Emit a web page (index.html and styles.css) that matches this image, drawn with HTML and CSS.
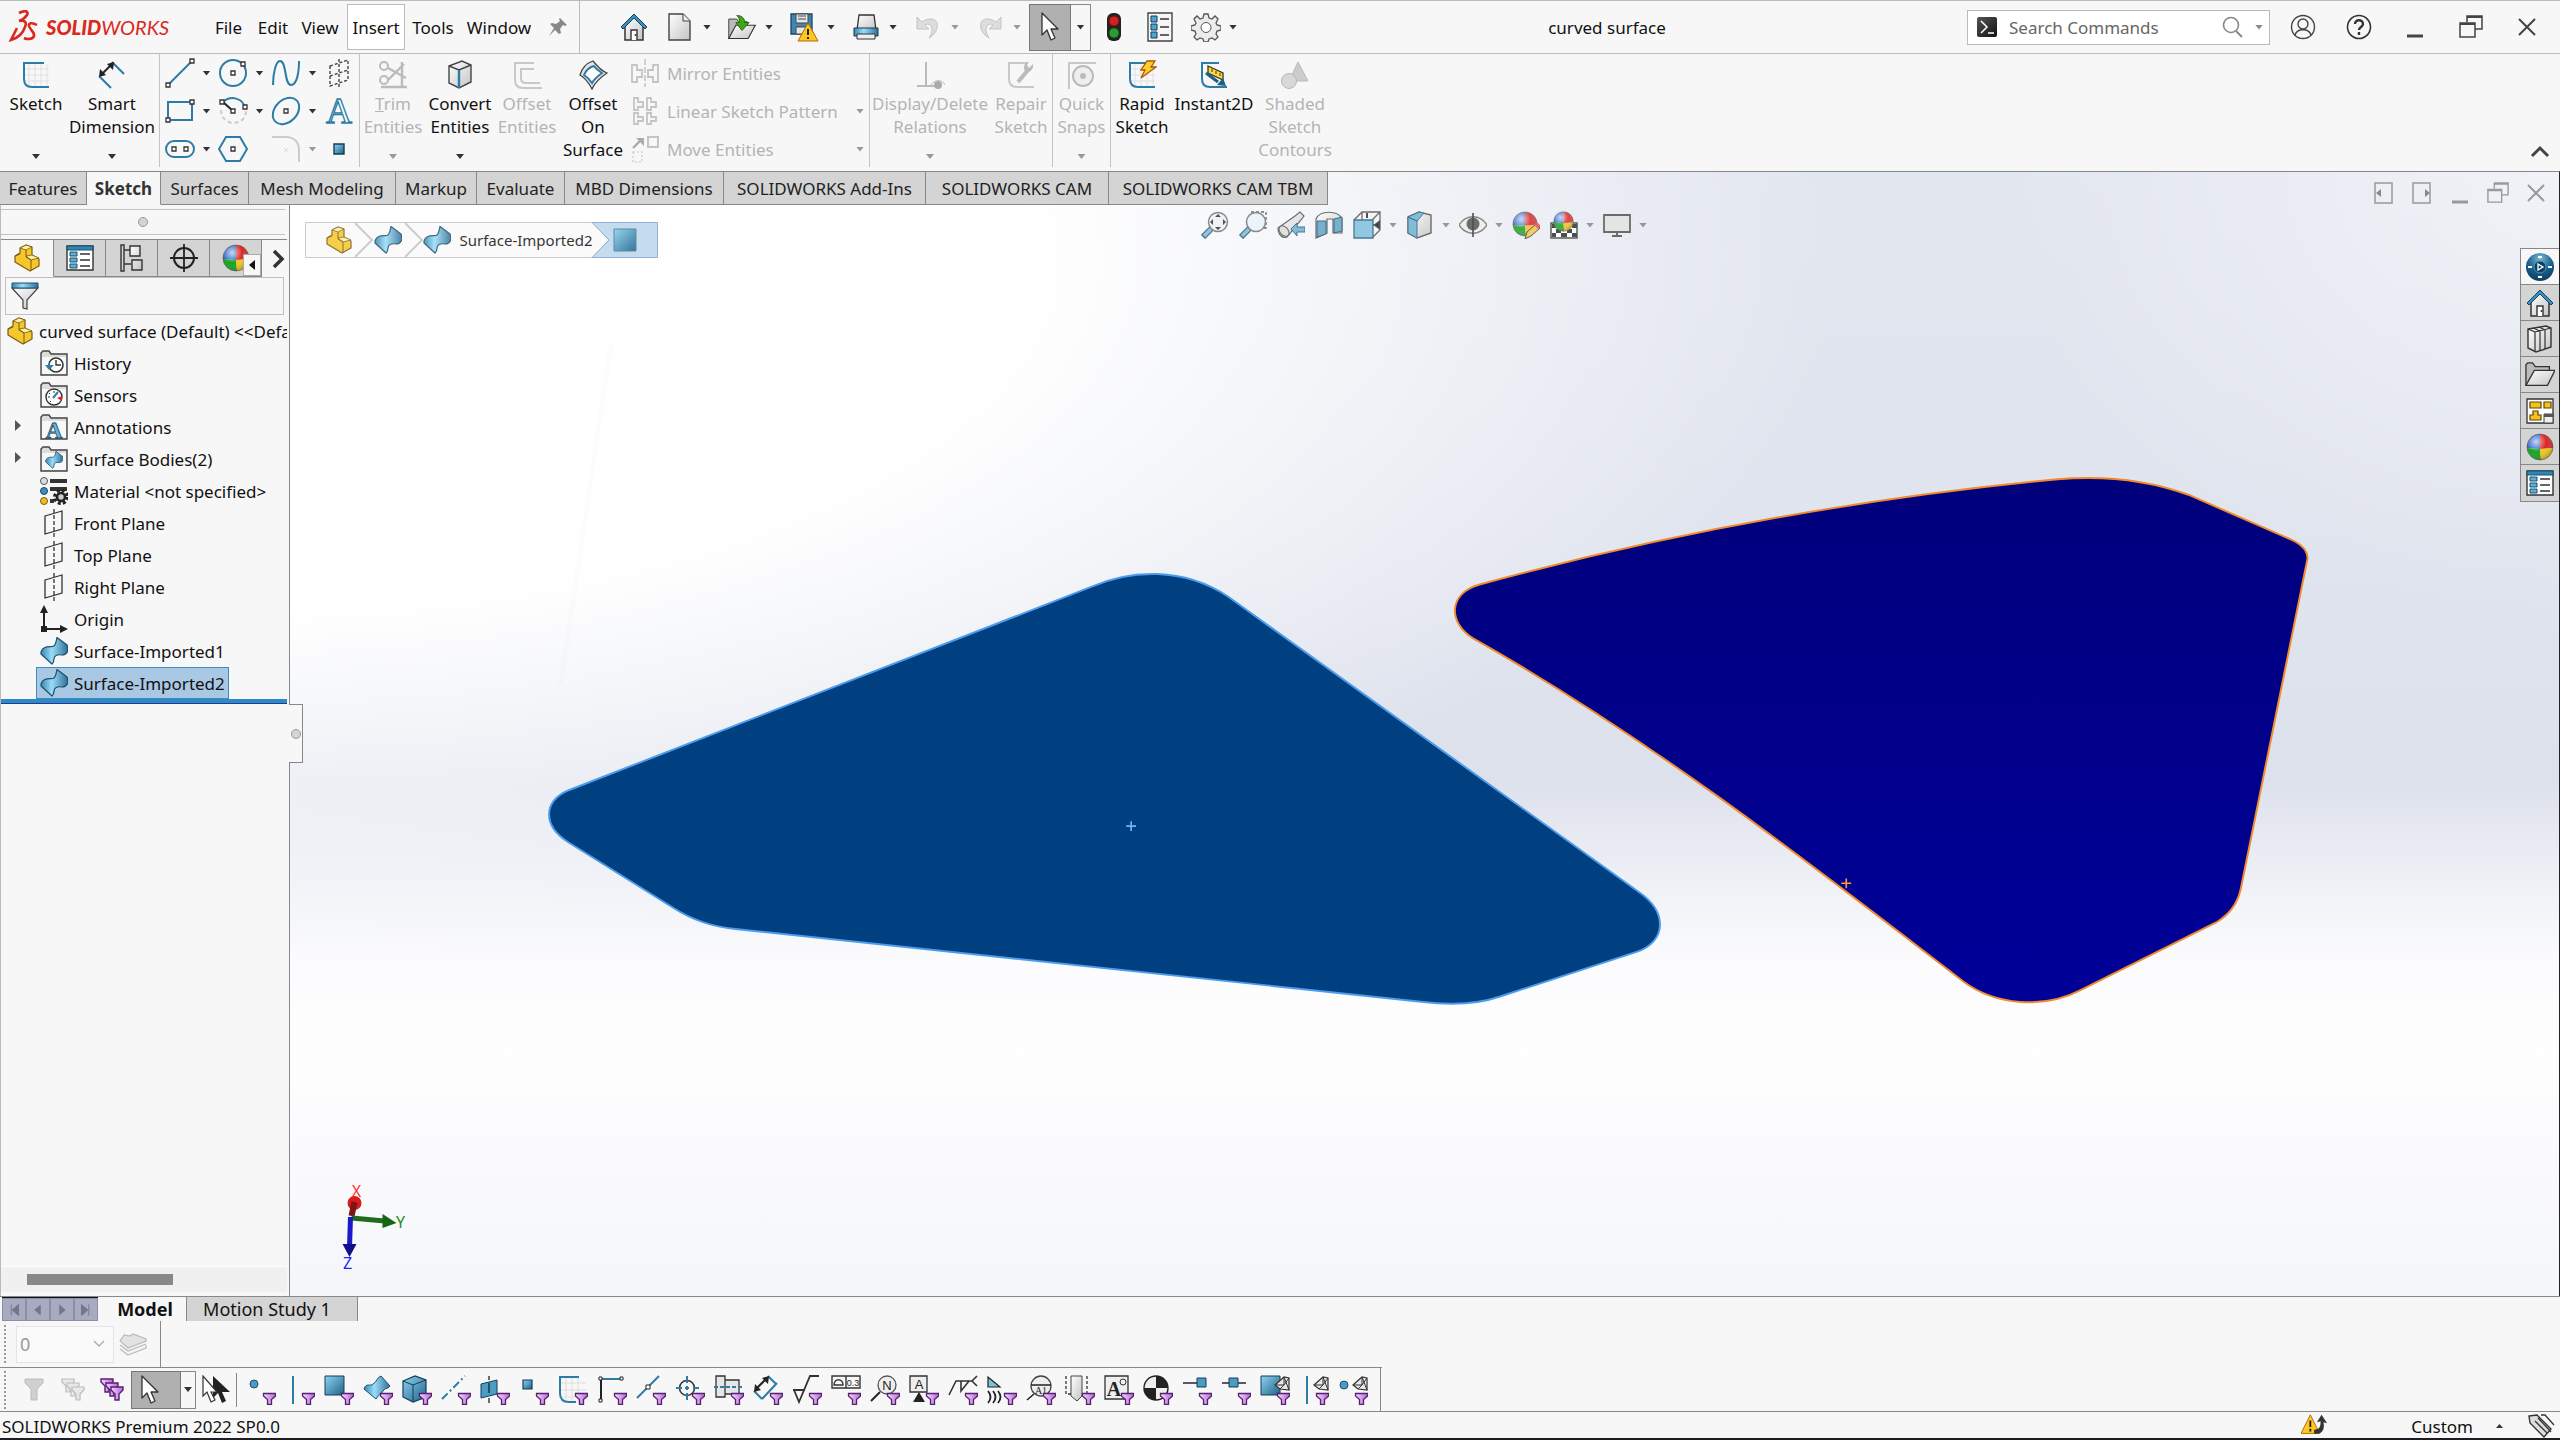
FILE: index.html
```html
<!DOCTYPE html>
<html lang="en">
<head>
<meta charset="utf-8">
<title>curved surface</title>
<link rel="stylesheet" href="styles.css">
</head>
<body>
<svg class="sprite" aria-hidden="true">
  <defs>
    <linearGradient id="gb" x1="0" y1="0" x2="1" y2="1"><stop offset="0" stop-color="#8fd3f2"/><stop offset="1" stop-color="#1f6288"/></linearGradient>
    <linearGradient id="gh" x1="0" y1="0" x2="1" y2="0"><stop offset="0" stop-color="#3787b0"/><stop offset=".4" stop-color="#9adcf8"/><stop offset="1" stop-color="#2d7197"/></linearGradient>
    <linearGradient id="gw" x1="0" y1="0" x2="1" y2="1"><stop offset="0" stop-color="#fff"/><stop offset="1" stop-color="#c4c4c4"/></linearGradient>
    <linearGradient id="gp" x1="0" y1="0" x2="1" y2="0"><stop offset="0" stop-color="#f6d6ff"/><stop offset="1" stop-color="#b567d8"/></linearGradient>
    <linearGradient id="gk" x1="0" y1="0" x2="1" y2="1"><stop offset="0" stop-color="#555"/><stop offset="1" stop-color="#111"/></linearGradient>
    <radialGradient id="gs" cx=".35" cy=".3" r=".8"><stop offset="0" stop-color="#fff" stop-opacity=".75"/><stop offset=".5" stop-color="#fff" stop-opacity="0"/><stop offset="1" stop-color="#000" stop-opacity=".35"/></radialGradient>
    <radialGradient id="gd" cx=".5" cy=".2" r=".9"><stop offset="0" stop-color="#7db9d8"/><stop offset=".5" stop-color="#17608c"/><stop offset="1" stop-color="#0a3350"/></radialGradient>
    <linearGradient id="gn" x1="0" y1="0" x2="0" y2="1"><stop offset="0" stop-color="#00007c"/><stop offset="1" stop-color="#000098"/></linearGradient>
  </defs>
  <symbol id="funnel" viewBox="0 0 30 30"><path d="M17.500 18.500h12v2.500l-4 3.500v5h-4v-5l-4-3.500z" fill="url(#gp)" stroke="#55206e" stroke-width="1.300"/></symbol>
  <symbol id="part" viewBox="0 0 28 28"><path d="M2 12l5-3V4l6-3 6 2v8l7 4v7l-9 5L2 18z" fill="#f5c72c" stroke="#7a5c10" stroke-width="1.200" stroke-linejoin="round"/><path d="M7 4l6 2 6-3-6-2zM13 12l5 4 8-2-7-3z" fill="#fdeea0" stroke="#7a5c10" stroke-width=".8"/><path d="M13 6v7l5 3v11M2 12l5-2" fill="none" stroke="#7a5c10"/></symbol>
  <symbol id="surf" viewBox="0 0 28 28"><path d="M1 15C3 9 8 10 13 9.500c3-1 3-5 4-9L27 8c2 6 0 10-5 10-5-1-8 1-8 4 0 2-1 4-2 5L1 17z" fill="url(#gh)" stroke="#1d4f6c" stroke-width="1.200" stroke-linejoin="round"/></symbol>
  <symbol id="home" viewBox="0 0 28 30"><path d="M5 14v14h18V14l-9-9z" fill="url(#gw)" stroke="#333" stroke-width="1.500"/><path d="M1 15L14 2l13 13-2 2L14 6 3 17z" fill="#3c8fba" stroke="#14455f"/><path d="M11 28V18h6v10" fill="#fff" stroke="#333" stroke-width="1.400"/><circle cx="15.500" cy="23" r="1" fill="#333"/></symbol>
  <symbol id="ball" viewBox="0 0 28 28"><path d="M14 1A13 13 0 0 0 1 15l13 1z" fill="#2a62c8"/><path d="M14 1a13 13 0 0 1 13 14l-13 1z" fill="#d92727"/><path d="M1 15a13 13 0 0 0 14 12l-1-11z" fill="#17a221"/><path d="M27 15a13 13 0 0 1-12 12l-1-11z" fill="#f2c51d"/><circle cx="14" cy="14" r="13" fill="url(#gs)" stroke="#555" stroke-width=".6"/></symbol>
  <symbol id="list" viewBox="0 0 28 28"><path d="M1 2h26v24H1z" fill="#fff" stroke="#333" stroke-width="1.400"/><path d="M1 2h26v4H1z" fill="#2f86b3" stroke="#17506f"/><path d="M4 8h7v4H4zM4 14h7v4H4zM4 20h7v4H4z" fill="#5fb0d8" stroke="#17506f"/><path d="M14 10h10M14 16h10M14 22h10" stroke="#333" stroke-width="1.300"/></symbol>
  <symbol id="cursor" viewBox="0 0 20 30"><path d="M2 1v22l5-5 4 10 4-2-4-9h7z" fill="#fff" stroke="#333" stroke-width="1.300" stroke-linejoin="round"/></symbol>
  <symbol id="plane" viewBox="0 0 28 28"><path d="M5 7l17-5v18L5 25z" fill="none" stroke="#333" stroke-width="1.300"/><path d="M14 0v28" stroke="#333" stroke-width="1.300" stroke-dasharray="4 2"/></symbol>
  <symbol id="folder" viewBox="0 0 28 26"><path d="M1 25V3l2-2h6l2 3h16v21z" fill="#ddd" stroke="#444" stroke-width="1.400"/><path d="M2 7h24v17H2z" fill="#f8f8f8"/></symbol>
  <symbol id="restore" viewBox="0 0 24 24"><path d="M8 7V1h15v13h-7M1 8h15v14H1z" fill="none" stroke="currentColor" stroke-width="1.500"/><path d="M8 2h15M1 9h15" stroke="currentColor" stroke-width="2"/></symbol>
  <symbol id="close" viewBox="0 0 20 20"><path d="M2 2l16 16M18 2L2 18" stroke="currentColor" stroke-width="2"/></symbol>
  <symbol id="hlens" viewBox="0 0 28 28"><path d="M11 17l-9 9" stroke="#2f5f78" stroke-width="6"/><path d="M10 18l-7 7" stroke="#7fbcd8" stroke-width="3.500"/><circle cx="17" cy="11" r="9.500" fill="#eaf4f8" stroke="#777" stroke-width="1.500"/></symbol>
  <symbol id="mesh" viewBox="0 0 30 30"><path d="M15 10L24 2l5 1v12l-9-1z" fill="#e8e8e8" stroke="#333" stroke-width="1.200"/><path d="M15 10l9 0V2l5 13M24 10l5-7M24 10l-4 4" fill="none" stroke="#333"/></symbol>
</svg>

<header class="titlebar">
  <div class="brand">
    <svg class="mark" viewBox="0 0 30 34"><path d="M10 3c6-3 10-2 8 2-2 3-5 5-8 6 6-1 8 1 6 6-2 6-7 11-14 13l6-12M28 15c-5-3-9-2-8 1 1 4 6 6 5 10-1 3-6 4-10 2" fill="none" stroke="#da291c" stroke-width="2.600"/></svg>
    <span class="logo"><b>SOLID</b>WORKS</span>
  </div>
  <nav class="menu">
    <button>File</button><button>Edit</button><button>View</button><button class="open">Insert</button><button>Tools</button><button>Window</button>
  </nav>
  <button class="pin" aria-label="Pin menu"><svg viewBox="0 0 20 20" width="20" height="20"><path d="M12 1l7 7-2 1-2-1-3 4 1 4-2 1-4-4-6 6 5-8-4-4 2-1 4 1 4-3-1-2z" fill="#888"/></svg></button>
  <div class="quick">
    <button class="q"><svg class="i30"><use href="#home"/></svg></button>
    <button class="q"><svg class="i30" viewBox="0 0 30 30"><path d="M4 2h14l7 7v19H4z" fill="url(#gw)" stroke="#444" stroke-width="1.400"/><path d="M18 2v7h7" fill="#eee" stroke="#444"/></svg></button><i class="dd"></i>
    <button class="q"><svg class="i30" viewBox="0 0 34 30"><path d="M2 28V6h9l2 3h10v19z" fill="#bbb" stroke="#333"/><path d="M2 28l8-15h22l-8 15z" fill="url(#gw)" stroke="#333" stroke-width="1.300"/><path d="M11 2c7 0 9 4 9 8h5l-8 9-7-9h4c0-3 0-6-3-8z" fill="#3fa51c" stroke="#226209"/></svg></button><i class="dd"></i>
    <button class="q"><svg class="i30" viewBox="0 0 30 30"><path d="M2 2h21v20H2z" fill="#3c88b3" stroke="#1c4661" stroke-width="1.300"/><path d="M7 2h12v9H7zM7 15h12v7H7z" fill="#e6e6e6" stroke="#444"/><path d="M9 4h8M9 7h8" stroke="#444"/><path d="M19 11l10 18H9z" fill="#fcc722" stroke="#b26a00"/><path d="M19 17v6M19 25v2" stroke="#222" stroke-width="2"/></svg></button><i class="dd"></i>
    <button class="q"><svg class="i30" viewBox="0 0 30 30"><path d="M8 3h15l2 15H6z" fill="url(#gw)" stroke="#333" stroke-width="1.300"/><path d="M3 16h24v8H3z" fill="url(#gh)" stroke="#133b52"/><path d="M6 22h18v5H6z" fill="#eee" stroke="#333"/></svg></button><i class="dd"></i>
    <button class="q" disabled><svg class="i30" viewBox="0 0 30 30"><path d="M4 5v12h12l-4-4c6-3 10 4 4 13 11-6 11-20 1-19-4 0-6 2-8 3z" fill="#ddd" stroke="#c4c4c4"/></svg></button><i class="dd dim"></i>
    <button class="q" disabled><svg class="i30" viewBox="0 0 30 30"><path d="M26 5v12H14l4-4c-6-3-10 4-4 13C3 20 3 6 13 7c4 0 6 2 8 3z" fill="#ddd" stroke="#c4c4c4"/></svg></button><i class="dd dim"></i>
    <div class="pick"><button class="pickmain"><svg class="cur"><use href="#cursor"/></svg></button><button class="pickdd"><i class="dd"></i></button></div>
    <button class="q traffic"><svg class="i30" viewBox="0 0 30 30"><rect x="8" y="1" width="14" height="28" rx="6" fill="#222"/><circle cx="15" cy="9" r="5" fill="#d32020" stroke="#7c0d0d"/><circle cx="15" cy="21" r="5" fill="#2b9c31" stroke="#0e5413"/></svg></button>
    <button class="q props"><svg class="i30" viewBox="0 0 30 30"><path d="M3 1h24v28H3z" fill="#f6f6f6" stroke="#444" stroke-width="1.400"/><path d="M6 4h6v6H6zM6 12h6v6H6zM6 20h6v6H6z" fill="#4fa3cd" stroke="#123e57"/><path d="M15 7h9M15 15h9M15 23h9" stroke="#333" stroke-width="1.400"/></svg></button>
    <button class="q"><svg class="i30" viewBox="0 0 30 30"><path d="M13 2h4l1 4 3 1 3-3 3 3-2 4 1 2 4 1v4l-4 1-1 3 2 3-3 3-3-2-3 1-1 3h-4l-1-3-3-1-3 2-3-3 2-3-1-3-4-1v-4l4-1 1-2-2-4 3-3 3 3 3-1z" fill="#ececec" stroke="#555" stroke-width="1.300"/><circle cx="15" cy="15.500" r="5" fill="#fff" stroke="#555"/></svg></button><i class="dd"></i>
  </div>
  <div class="doctitle">curved surface</div>
  <div class="search">
    <svg width="22" height="22" viewBox="0 0 22 22"><rect x="1" y="1" width="20" height="20" rx="2" fill="url(#gk)"/><path d="M5 5l6 6-6 6M12 17h6" fill="none" stroke="#fff" stroke-width="1.500"/></svg>
    <input type="text" placeholder="Search Commands" aria-label="Search Commands">
    <svg width="22" height="22" viewBox="0 0 22 22"><circle cx="9" cy="9" r="7.500" fill="none" stroke="#888" stroke-width="1.600"/><path d="M14 15l6 6" stroke="#888" stroke-width="2"/></svg>
    <i class="dd mid"></i>
  </div>
  <div class="winctl">
    <button aria-label="Account"><svg width="26" height="26" viewBox="0 0 26 26" fill="none" stroke="#444" stroke-width="1.400"><circle cx="13" cy="13" r="11.500"/><circle cx="13" cy="10" r="5"/><path d="M5 21c2-7 14-7 16 0"/></svg></button>
    <button aria-label="Help"><svg width="26" height="26" viewBox="0 0 26 26" fill="none" stroke="#333"><circle cx="13" cy="13" r="11.500" stroke-width="1.600"/><path d="M9 10c0-5 8-5 8 0 0 3-4 3-4 6M13 18v3" stroke-width="2.400"/></svg></button>
    <button aria-label="Minimize"><svg width="20" height="24" viewBox="0 0 20 24"><path d="M2 21h16" stroke="#444" stroke-width="3"/></svg></button>
    <button aria-label="Restore"><svg width="24" height="24"><use href="#restore"/></svg></button>
    <button aria-label="Close"><svg width="20" height="20"><use href="#close"/></svg></button>
  </div>
</header>

<section class="ribbon">
  <div class="group g-sketch">
    <button class="cmd w62"><svg class="i30" viewBox="0 0 30 30"><path d="M8 4v24M14 4v24M20 4v24M26 4v24M3 9h25M3 15h25M3 21h25" stroke="#e0e0e0"/><path d="M23 3H3v16c0 6 4 8 8 8h17" fill="none" stroke="#2d7ca6" stroke-width="2"/></svg><span>Sketch</span><i class="dd"></i></button>
    <button class="cmd w90"><svg class="i30" viewBox="0 0 30 30"><path d="M15 2l12 12M2 16l12 12" stroke="#2d7ca6" stroke-width="2"/><path d="M4 15L16 3" stroke="#222" stroke-width="2"/><path d="M2 17l1-8 6 6zM17 2l-1 8-6-6z" fill="#222"/></svg><span>Smart<br>Dimension</span><i class="dd"></i></button>
  </div>
  <div class="group g-tools">
    <button class="tool"><svg class="i30" viewBox="0 0 30 30"><path d="M4 26L26 4" stroke="#2d7ca6" stroke-width="2"/><path d="M1 25h4v4H1zM25 1h4v4h-4z" fill="#fff" stroke="#333" stroke-width="1.300"/></svg></button><i class="dd"></i>
    <button class="tool"><svg class="i30" viewBox="0 0 30 30"><circle cx="15" cy="15" r="13" fill="none" stroke="#2d7ca6" stroke-width="2"/><path d="M13 13h4v4h-4zM23 4h4v4h-4z" fill="#fff" stroke="#333" stroke-width="1.300"/></svg></button><i class="dd"></i>
    <button class="tool"><svg class="i30" viewBox="0 0 30 30"><path d="M2 27C2 15 5 3 9 3c7 0 4 24 11 24 6 0 8-13 8-24" fill="none" stroke="#2d7ca6" stroke-width="2"/></svg></button><i class="dd"></i>
    <button class="tool"><svg class="i30" viewBox="0 0 30 30"><path d="M6 8l18-6v20L6 28zM6 18l18-6M15 1v28" fill="none" stroke="#444" stroke-width="1.400" stroke-dasharray="3 2"/></svg></button>
    <button class="tool"><svg class="i30" viewBox="0 0 30 30"><path d="M3 6h24v18H3z" fill="none" stroke="#2d7ca6" stroke-width="2"/><path d="M1 22h4v4H1zM25 4h4v4h-4z" fill="#fff" stroke="#333" stroke-width="1.300"/></svg></button><i class="dd"></i>
    <button class="tool"><svg class="i30" viewBox="0 0 30 30"><path d="M5 6c8-7 20-4 22 6" fill="none" stroke="#2d7ca6" stroke-width="2"/><path d="M3 14c0 17 25 17 25 1" fill="none" stroke="#ccc" stroke-width="2" stroke-dasharray="4 3"/><path d="M5 6l10 9" stroke="#222" stroke-width="2"/><path d="M2 4h4v4H2zM13 13h4v4h-4zM25 9h4v4h-4z" fill="#fff" stroke="#333" stroke-width="1.300"/></svg></button><i class="dd"></i>
    <button class="tool"><svg class="i30" viewBox="0 0 30 30"><ellipse cx="15" cy="15" rx="15" ry="11" transform="rotate(-45 15 15)" fill="none" stroke="#2d7ca6" stroke-width="2"/><path d="M13 13h4v4h-4z" fill="#fff" stroke="#333" stroke-width="1.300"/></svg></button><i class="dd"></i>
    <button class="tool"><svg class="i30 glyph" viewBox="0 0 30 30"><text x="15" y="27" text-anchor="middle" font-family="Liberation Serif, serif" font-size="36" fill="#fff" stroke="#2d7ca6" stroke-width="1.300">A</text></svg></button>
    <button class="tool"><svg class="i30" viewBox="0 0 30 30"><rect x="1" y="7" width="28" height="16" rx="8" fill="none" stroke="#2d7ca6" stroke-width="2"/><path d="M7 13h4v4H7zM19 13h4v4h-4z" fill="#fff" stroke="#333" stroke-width="1.300"/></svg></button><i class="dd"></i>
    <button class="tool"><svg class="i30" viewBox="0 0 30 30"><path d="M8 3h14l7 12-7 12H8L1 15z" fill="none" stroke="#2d7ca6" stroke-width="2"/><path d="M13 13h4v4h-4z" fill="#fff" stroke="#333" stroke-width="1.300"/></svg></button><i class="gap"></i>
    <button class="tool"><svg class="i30" viewBox="0 0 30 30"><path d="M1 3h14c8 0 13 5 13 13v12" fill="none" stroke="#ccc" stroke-width="2"/><path d="M13 14l4 4M17 14l-4 4" stroke="#ddd"/></svg></button><i class="dd dim"></i>
    <button class="tool"><svg class="i30" viewBox="0 0 30 30"><path d="M10 10h10v10H10z" fill="url(#gb)" stroke="#123e57" stroke-width="1.400"/></svg></button>
  </div>
  <div class="group">
    <button class="cmd w66" disabled><svg class="i30" viewBox="0 0 30 30"><path d="M3 27h26M24 2v26M10 8l18 10M10 20L26 4" stroke="#bbb" stroke-width="2.400"/><circle cx="6" cy="6" r="4" fill="none" stroke="#bbb" stroke-width="2"/><circle cx="6" cy="20" r="4" fill="none" stroke="#bbb" stroke-width="2"/></svg><span><u>T</u>rim<br>Entities</span><i class="dd dim"></i></button>
    <button class="cmd w68"><svg class="i30" viewBox="0 0 30 30"><path d="M4 6l13-5 9 4v17l-12 6-10-5z" fill="url(#gw)" stroke="#444" stroke-width="1.400"/><path d="M4 6l10 4 12-5" fill="none" stroke="#444" stroke-width="1.400"/><path d="M14 10v18" stroke="#2d7ca6" stroke-width="2.400"/></svg><span>Convert<br>Entities</span><i class="dd"></i></button>
    <button class="cmd w66" disabled><svg class="i30" viewBox="0 0 30 30"><path d="M22 3H3v17c0 6 4 8 8 8h19M22 9H9v9c0 3 2 5 5 5h14" fill="none" stroke="#c8c8c8" stroke-width="2"/></svg><span>Offset<br>Entities</span></button>
    <button class="cmd w66"><svg class="i30" viewBox="0 0 30 30"><path d="M2 15C4 8 9 3 15 1c4 5 8 10 14 12-6 4-12 9-15 16-3-6-7-11-12-14z" fill="#e5e5e5" stroke="#444" stroke-width="1.300"/><path d="M6 15c2-5 6-8 10-9 2 3 5 5 8 7-4 3-8 6-10 10-2-3-5-6-8-8z" fill="#fff" stroke="#2d7ca6" stroke-width="2"/></svg><span>Offset<br>On<br>Surface</span></button>
    <div class="stack">
      <button class="row" disabled><svg class="i28" viewBox="0 0 28 28"><path d="M1 6h5v5h5v7H6v5H1zM27 6h-5v5h-5v7h5v5h5z" fill="none" stroke="#c4c4c4" stroke-width="1.800"/><path d="M14 0v28" stroke="#c4c4c4" stroke-width="1.500" stroke-dasharray="6 2"/></svg><span>Mirror Entities</span></button>
      <button class="row" disabled><svg class="i28" viewBox="0 0 28 28"><path d="M3 1h4v4h5v5H7v3H3zM16 1h4v4h5v5h-5v3h-4zM3 16h4v4h5v4H7v3H3zM16 16h4v4h5v4h-5v3h-4z" fill="none" stroke="#c4c4c4" stroke-width="1.800"/></svg><span>Linear Sketch Pattern</span><i class="dd dim"></i></button>
      <button class="row" disabled><svg class="i28" viewBox="0 0 28 28"><path d="M17 2h10v10H17z" fill="none" stroke="#c4c4c4" stroke-width="2"/><path d="M2 13l8-8" stroke="#aaa" stroke-width="2.400"/><path d="M5 3h8v8z" fill="#aaa"/><path d="M2 17h9v10H2z" fill="none" stroke="#d4d4d4" stroke-width="1.500" stroke-dasharray="2 2"/></svg><span>Move Entities</span><i class="dd dim"></i></button>
    </div>
  </div>
  <div class="group">
    <button class="cmd w120" disabled><svg class="i30" viewBox="0 0 30 30"><path d="M2 26h18M11 2v24" stroke="#bbb" stroke-width="2"/><circle cx="23" cy="25" r="4" fill="#aaa"/><path d="M16 25c4-6 11-6 14 0" fill="none" stroke="#bbb"/></svg><span>Display/Delete<br>Relations</span><i class="dd dim"></i></button>
    <button class="cmd w62" disabled><svg class="i30" viewBox="0 0 30 30"><path d="M22 3H3v16c0 6 4 8 8 8h17" fill="none" stroke="#c8c8c8" stroke-width="2"/><path d="M12 22l10-12" stroke="#bbb" stroke-width="4"/><path d="M27 4l-4 4-2-3 2-3c-6 0-6 8-3 10 4 1 8-3 7-8z" fill="#bbb"/></svg><span>Repair<br>Sketch</span></button>
  </div>
  <div class="group">
    <button class="cmd w57" disabled><svg class="i30" viewBox="0 0 30 30"><path d="M2 29V3h27" fill="none" stroke="#bbb" stroke-width="1.600"/><circle cx="16" cy="16" r="10" fill="#eee" stroke="#bbb" stroke-width="2"/><circle cx="16" cy="16" r="3" fill="#bbb"/></svg><span>Quick<br>Snaps</span><i class="dd dim"></i></button>
  </div>
  <div class="group last">
    <button class="cmd w62"><svg class="i30" viewBox="0 0 30 30"><path d="M8 4v24M14 4v24M20 4v24M26 4v24M3 9h25M3 15h25M3 21h25" stroke="#e0e0e0"/><path d="M23 3H3v16c0 6 4 8 8 8h17" fill="none" stroke="#2d7ca6" stroke-width="2"/><path d="M20 1h8l-4 6h5L14 18l4-8h-4z" fill="#ffd02b" stroke="#b35400" stroke-width="1.300"/></svg><span>Rapid<br>Sketch</span></button>
    <button class="cmd w82"><svg class="i30" viewBox="0 0 30 30"><path d="M20 3H3v16c0 6 4 8 8 8h17" fill="none" stroke="#2d7ca6" stroke-width="2"/><path d="M9 6l15 7v7L9 13z" fill="#ffd83a" stroke="#333" stroke-width="1.300"/><path d="M13 9v3M17 11v3M21 13v3" stroke="#333"/><path d="M7 13l12 9" stroke="#1f5f85" stroke-width="3"/><path d="M18 25l9 1-3-8z" fill="#1f5f85"/></svg><span>Instant2D</span></button>
    <button class="cmd w80" disabled><svg class="i30" viewBox="0 0 30 30"><path d="M18 2l10 19H9z" fill="#ccc" stroke="#bbb"/><circle cx="9" cy="21" r="7.500" fill="#d8d8d8" stroke="#b8b8b8"/></svg><span>Shaded<br>Sketch<br>Contours</span></button>
  </div>
  <button class="collapse" aria-label="Collapse"><svg width="20" height="14" viewBox="0 0 20 14"><path d="M2 12l8-8 8 8" fill="none" stroke="#444" stroke-width="3"/></svg></button>
</section>

<main class="workspace">
  <div class="tabrow">
    <nav class="tabs">
      <button>Features</button><button class="on">Sketch</button><button>Surfaces</button><button>Mesh Modeling</button><button>Markup</button><button>Evaluate</button><button>MBD Dimensions</button><button>SOLIDWORKS Add-Ins</button><button>SOLIDWORKS CAM</button><button>SOLIDWORKS CAM TBM</button>
    </nav>
    <div class="mdi">
      <button aria-label="Pane left"><svg width="20" height="24" viewBox="0 0 20 24"><path d="M1 2h17v20H1z" fill="none" stroke="#999" stroke-width="1.500"/><path d="M7 8v8l-5-4z" fill="#888"/></svg></button>
      <button aria-label="Pane right"><svg width="20" height="24" viewBox="0 0 20 24"><path d="M1 2h17v20H1z" fill="none" stroke="#999" stroke-width="1.500"/><path d="M13 8v8l5-4z" fill="#888"/></svg></button>
      <button aria-label="Minimize document"><svg width="20" height="24" viewBox="0 0 20 24"><path d="M2 21h16" stroke="#999" stroke-width="3"/></svg></button>
      <button aria-label="Restore document"><svg width="24" height="22"><use href="#restore"/></svg></button>
      <button aria-label="Close document"><svg width="20" height="20"><use href="#close"/></svg></button>
    </div>
  </div>
  <div class="stage">
    <aside class="panel">
      <div class="grip"><i class="knob"></i></div>
      <div class="ptabs">
        <button class="on"><svg class="i28"><use href="#part"/></svg></button>
        <button><svg class="i28"><use href="#list"/></svg></button>
        <button><svg class="i28" viewBox="0 0 28 28"><path d="M3 1h3v26H3zM6 6h6M6 20h7" fill="none" stroke="#333" stroke-width="1.400"/><path d="M12 2h10v10H12zM14 16h10v10H14z" fill="url(#gw)" stroke="#333" stroke-width="1.400"/></svg></button>
        <button><svg class="i28" viewBox="0 0 28 28"><circle cx="14" cy="14" r="10" fill="none" stroke="#222" stroke-width="2"/><path d="M14 0v28M0 14h28" stroke="#222" stroke-width="1.800"/></svg></button>
        <button class="pball"><svg class="i28"><use href="#ball"/></svg><i class="back"></i></button>
        <button class="more"><svg width="14" height="22" viewBox="0 0 14 22"><path d="M2 3l8 8-8 8" fill="none" stroke="#333" stroke-width="3.500"/></svg></button>
      </div>
      <label class="filter"><svg class="i28" viewBox="0 0 28 28"><path d="M1 6l11 12v8l4 1v-9L27 6z" fill="url(#gw)" stroke="#444" stroke-width="1.200"/><path d="M1 1h26v5H1z" fill="url(#gh)" stroke="#17506f"/></svg><input type="text" aria-label="Filter tree"></label>
      <div class="root"><svg class="i28"><use href="#part"/></svg><span>curved surface (Default) &lt;&lt;Default&gt;</span></div>
      <ul class="tree">
        <li><i class="tw"></i><button><svg class="i28" viewBox="0 0 28 26"><use href="#folder"/><circle cx="16" cy="15" r="7" fill="#fff" stroke="#333" stroke-width="1.600"/><path d="M16 10v5h5" fill="none" stroke="#333" stroke-width="1.400"/><path d="M5 15h9l-5 5z" fill="#2f7fa8"/></svg>History</button></li>
        <li><i class="tw"></i><button><svg class="i28" viewBox="0 0 28 26"><use href="#folder"/><circle cx="14" cy="15" r="8" fill="#fff" stroke="#333" stroke-width="1.400"/><path d="M17 16l5-2v5z" fill="#d22"/><path d="M13 16l5-6" stroke="#2f7fa8" stroke-width="2"/><path d="M8 15h2M14 9v2M9 11l1 1M10 20l1-1" stroke="#333"/></svg>Sensors</button></li>
        <li><i class="tw has"></i><button><svg class="i28 glyph" viewBox="0 0 28 26"><use href="#folder"/><text x="14" y="24" text-anchor="middle" font-family="Liberation Serif, serif" font-weight="bold" font-size="23" fill="#6bb5d8" stroke="#1d4f6c" stroke-width=".8">A</text></svg>Annotations</button></li>
        <li><i class="tw has"></i><button><svg class="i28" viewBox="0 0 28 26"><use href="#folder"/><use href="#surf" x="5" y="5" width="18" height="18"/></svg>Surface Bodies(2)</button></li>
        <li><i class="tw"></i><button><svg class="i28 mat" viewBox="0 0 28 28"><circle cx="4" cy="4" r="3.500" fill="#ddd" stroke="#555"/><circle cx="4" cy="14" r="3.500" fill="#3c8fba" stroke="#1c4661"/><circle cx="4" cy="24" r="3.500" fill="#f0bd1c" stroke="#7a5c10"/><path d="M10 4h17M10 12h17M10 24h4" stroke="#333" stroke-width="4"/><circle cx="21" cy="20" r="6.500" fill="none" stroke="#222" stroke-width="3" stroke-dasharray="3 2.100"/><circle cx="21" cy="20" r="4" fill="#ccc" stroke="#222" stroke-width="2.600"/></svg>Material &lt;not specified&gt;</button></li>
        <li><i class="tw"></i><button><svg class="i28"><use href="#plane"/></svg>Front Plane</button></li>
        <li><i class="tw"></i><button><svg class="i28"><use href="#plane"/></svg>Top Plane</button></li>
        <li><i class="tw"></i><button><svg class="i28"><use href="#plane"/></svg>Right Plane</button></li>
        <li><i class="tw"></i><button><svg class="i28" viewBox="0 0 28 28"><path d="M4 24V7M4 24h17" stroke="#222" stroke-width="2"/><path d="M1 21h6v6H1zM4 0l4 8H0zM28 24l-8-4v8z" fill="#222"/></svg>Origin</button></li>
        <li><i class="tw"></i><button><svg class="i28"><use href="#surf"/></svg>Surface-Imported1</button></li>
        <li><i class="tw"></i><button class="sel"><svg class="i28"><use href="#surf"/></svg>Surface-Imported2</button></li>
      </ul>
      <div class="rollback"></div>
      <div class="hscroll"><i></i></div>
      <div class="split"><i class="knob"></i></div>
    </aside>

    <section class="view">
      <svg class="scene" viewBox="290 205 2268 1091" preserveAspectRatio="xMidYMid meet">
        <g transform="scale(1.6327)">
          <path d="M348 484L668 359.500C692 349 724 347 752 365.500L1003 546C1022 559 1020 577 1002 583L918 610.500Q899 617 870 613.500L450 569Q429 567 412 556L348 516C332 506 332 491 348 484Z" fill="#004080" stroke="#4c9ceb" stroke-width="1.200"/>
          <path d="M906 358C1020 327 1140 305 1260 293.500C1290 291 1318 295 1340 303L1403 330.500Q1413 335 1413 342L1372 545Q1369 558 1357 565L1274 606.500C1252 618 1222 616 1202 601C1110 530 1010 452 902 391C886 381 887 363 906 358Z" fill="url(#gn)" stroke="#f08a2c" stroke-width="1.200"/>
          <path d="M374 210L343 420" stroke="#000" stroke-opacity=".012" stroke-width="3"/>
          <path d="M692.500 503v6M689.500 506h6" stroke="#6db6ff" stroke-width="1"/>
          <path d="M1130.500 538v6M1127.500 541h6" stroke="#ff9a2c" stroke-width="1"/>
        </g>
        <circle cx="354" cy="1203" r="7" fill="#d91c1c"/>
        <path d="M354 1202l-3 14" stroke="#7c1515" stroke-width="6"/>
        <path d="M351 1218l33 3" stroke="#1d6d1d" stroke-width="5"/><path d="M382 1214l14 9-14 5z" fill="#136613"/>
        <path d="M350 1217l-1 30" stroke="#1a1ac8" stroke-width="5"/><path d="M342 1244h14l-7 13z" fill="#10108c"/>
        <g font-family="Noto Sans, sans-serif" font-size="16" text-anchor="middle"><text x="356" y="1197" fill="#f33">X</text><text x="400" y="1228" fill="#2a8a2a">Y</text><text x="347" y="1269" fill="#22f">Z</text></g>
      </svg>

      <nav class="crumbs">
        <svg class="crumbbg" viewBox="0 0 353 36" preserveAspectRatio="none"><path d="M.5.500h352v35H.5z" fill="#fafafa" stroke="#ccc"/><path d="M287 .5h65.500v35H287l17-17.500z" fill="#c5dcef" stroke="#8fb0d4"/><path d="M50 1l17 17-17 17M100 1l17 17-17 17" fill="none" stroke="#ccc" stroke-width="2"/></svg>
        <button class="c1"><svg class="i28"><use href="#part"/></svg></button><button class="c2"><svg class="i28"><use href="#surf"/></svg></button><button class="c3"><svg class="i28"><use href="#surf"/></svg><span>Surface-Imported2</span></button><button class="c4"><svg width="24" height="24" viewBox="0 0 24 24"><path d="M1 1h22v22H1z" fill="url(#gb)" stroke="#4c7d97"/></svg></button>
      </nav>

      <div class="hud">
        <button><svg class="i28" viewBox="0 0 28 28"><use href="#hlens"/><path d="M17 3l3 3h-6zM17 19l3-3h-6zM9 11l3-3v6zM25 11l-3-3v6z" fill="#333"/></svg></button>
        <button><svg class="i28" viewBox="0 0 28 28"><path d="M12 1h15v16h-4" fill="none" stroke="#555" stroke-width="1.300" stroke-dasharray="3 2"/><use href="#hlens"/></svg></button>
        <button><svg class="i28" viewBox="0 0 28 28"><path d="M1 17L18 5l5-4 4 4-3 4-14 17c-5 2-9-3-9-9z" fill="url(#gw)" stroke="#555" stroke-width="1.200"/><ellipse cx="7" cy="20" rx="4" ry="6" transform="rotate(-40 7 20)" fill="#ddd" stroke="#555"/><path d="M14 18l6-6v4h8v5h-8v4z" fill="#6bb0d0" stroke="#2b5f7c"/></svg></button>
        <button><svg class="i28" viewBox="0 0 28 28"><path d="M1 8c4-9 22-9 26 0v14h-9V8h-6v14L1 27z" fill="url(#gw)" stroke="#555" stroke-width="1.200"/><path d="M2 10h9v13l-9 3zM19 8l8-2v14l-8 2z" fill="#5fa6c8" stroke="#28556e"/></svg></button>
        <button><svg class="i28" viewBox="0 0 28 28"><path d="M1 9l8-8h18v18l-8 8M19 9l8-8M9 1v8M27 14h-7" fill="none" stroke="#555" stroke-width="1.300"/><path d="M1 9h19v18H1z" fill="#7fc0dd" stroke="#2b6380" stroke-width="1.300"/><path d="M14 2v5M22 14l4-3v6z" stroke="#333" stroke-width="2"/></svg></button><i class="dd mid"></i>
        <button><svg class="i28" viewBox="0 0 28 28"><path d="M2 6l11-5 12 3v18l-14 5-9-5z" fill="url(#gw)" stroke="#555" stroke-width="1.400"/><path d="M2 6l9 4v17l-9-5zM2 6l11-5 5 1-7 8z" fill="#6fb4d3" stroke="#2b6380"/></svg></button><i class="dd mid"></i>
        <button><svg class="i28" viewBox="0 0 28 28"><path d="M0 14C7 3 21 3 28 14 21 25 7 25 0 14z" fill="#eee" stroke="#777" stroke-width="1.400"/><circle cx="14" cy="13" r="6.500" fill="#555"/><path d="M14 2v24" stroke="#333" stroke-width="1.600"/></svg></button><i class="dd mid"></i>
        <button><svg class="i28" viewBox="0 0 28 28"><use href="#ball" width="26" height="26"/><path d="M13 28l2-7 9-8 4 4-9 8z" fill="#f3c54a" stroke="#444"/><path d="M22 14l3-3 4 4-3 3z" fill="#d55"/></svg></button>
        <button><svg class="i28" viewBox="0 0 28 28"><path d="M1 12h26v15H1z" fill="#fff" stroke="#444" stroke-width="1.500"/><path d="M2 13h5v4H2zM22 13h5v4h-5zM6 18h5v4H6zM17 18h5v4h-5zM2 22h4v4H2zM11 22h6v4h-6zM22 22h5v4h-5z" fill="#333"/><use href="#ball" x="3" y="0" width="21" height="21"/></svg></button><i class="dd mid"></i>
        <button><svg class="i28" viewBox="0 0 28 28"><path d="M1 4h26v17H1z" fill="#e3e3e3" stroke="#555" stroke-width="1.800"/><path d="M14 21v4M9 25h10" stroke="#555" stroke-width="2"/></svg></button><i class="dd mid"></i>
      </div>

      <nav class="taskpane">
        <button class="on"><svg class="i30" viewBox="0 0 30 30"><circle cx="15" cy="15" r="14" fill="url(#gd)"/><circle cx="15" cy="15" r="6" fill="#0d4163" stroke="#4d93b8"/><path d="M13 12l5 3-5 3z" fill="none" stroke="#fff" stroke-width="1.300"/><path d="M13 5h4M3 15h4M23 15h4M13 25h4" stroke="#fff" stroke-width="2"/></svg></button>
        <button><svg class="i30"><use href="#home"/></svg></button>
        <button><svg class="i30" viewBox="0 0 30 30"><path d="M3 5l18-3 5 2v19l-15 5-8-4z" fill="url(#gw)" stroke="#333" stroke-width="1.400"/><path d="M3 5l7 3v19M10 8l16-4M15 6v20M20 5v20M8 4l7 3M14 3l6 3" fill="none" stroke="#333" stroke-width="1.200"/></svg></button>
        <button><svg class="i30" viewBox="0 0 32 30"><path d="M1 26V4l2-2h5l3 4h15v6" fill="#bbb" stroke="#333" stroke-width="1.400"/><path d="M1 26l9-16h22l-8 16z" fill="url(#gw)" stroke="#333" stroke-width="1.400"/></svg></button>
        <button><svg class="i30" viewBox="0 0 30 30"><path d="M2 3h26v24H2z" fill="#fff" stroke="#333" stroke-width="1.300"/><path d="M5 6h11v6H5zM19 6h7v6h-7zM8 15h5v4h3v5H5v-5h3z" fill="#f4c21b" stroke="#5c4508" stroke-width="1.200"/><path d="M19 18h9v9h-9z" fill="#eee" stroke="#444"/><path d="M19 18h9v3h-9z" fill="#555"/></svg></button>
        <button><svg class="i28"><use href="#ball"/></svg></button>
        <button><svg class="i28"><use href="#list"/></svg></button>
      </nav>
    </section>
  </div>
</main>

<div class="modelbar">
  <div class="step"><button><svg viewBox="0 0 24 24"><path d="M9 6v12M17 6v12l-7-6z" fill="#73758f" stroke="#73758f"/></svg></button><button><svg viewBox="0 0 24 24"><path d="M15 6v12l-7-6z" fill="#73758f"/></svg></button><button><svg viewBox="0 0 24 24"><path d="M9 6v12l7-6z" fill="#73758f"/></svg></button><button><svg viewBox="0 0 24 24"><path d="M15 6v12M7 6v12l7-6z" fill="#73758f" stroke="#73758f"/></svg></button></div>
  <button class="mtab on">Model</button><button class="mtab">Motion Study 1</button>
</div>

<div class="layerbar">
  <i class="dots"></i>
  <div class="combo"><select disabled aria-label="Layer"><option>0</option></select><svg width="14" height="10" viewBox="0 0 14 10"><path d="M2 2l5 5 5-5" fill="none" stroke="#aaa" stroke-width="1.300"/></svg></div>
  <button class="layers" disabled aria-label="Layer properties"><svg class="i28" viewBox="0 0 28 28"><path d="M1 19l8 6 18-7v-3M1 15l8 6 18-7" fill="#f4f4f4" stroke="#bbb" stroke-width="1.200"/><path d="M1 11l4-6 6 1 3-2 13 5v2L9 18z" fill="#e2e2e2" stroke="#bbb" stroke-width="1.200"/></svg></button>
</div>

<div class="filterbar">
  <i class="dots"></i>
  <button class="fl"><svg class="i30" viewBox="0 0 30 30"><path d="M6 4h18v4l-6 6v11h-6V14L6 8z" fill="#d0d0d0" stroke="#bcbcbc"/></svg></button>
  <button class="fl"><svg class="i30" viewBox="0 0 30 30"><g fill="#e8e8e8" stroke="#bbb" stroke-width="1.200"><path d="M4 4h12v3l-4 4v6H8v-6L4 7z"/><path d="M9 8h12v3l-4 4v6h-4v-6l-4-4z"/><path d="M14 12h12v3l-4 4v6h-4v-6l-4-4z"/></g></svg></button>
  <button class="fl"><svg class="i30" viewBox="0 0 30 30"><g fill="url(#gp)" stroke="#55206e" stroke-width="1.400"><path d="M4 4h12v3l-4 4v6H8v-6L4 7z"/><path d="M9 8h12v3l-4 4v6h-4v-6l-4-4z"/><path d="M14 12h12v3l-4 4v6h-4v-6l-4-4z"/></g></svg></button>
  <div class="pick low"><button class="pickmain"><svg class="cur"><use href="#cursor"/></svg></button><button class="pickdd"><i class="dd"></i></button></div>
  <button class="fl two"><svg class="i30" viewBox="0 0 30 30"><path d="M12 1v22l5-5 4 10 4-2-4-9h8z" fill="#222"/><path d="M2 1v20l4-4 4 10 4-2-4-8h6z" fill="#fff" stroke="#333" stroke-width="1.200"/></svg></button>
  <div class="filters">
    <button><svg viewBox="0 0 30 30"><circle cx="8" cy="9" r="4" fill="#4a9cc4" stroke="#1d4f6c"/><use href="#funnel"/></svg></button>
    <button><svg viewBox="0 0 30 30"><path d="M8 1v28" stroke="#2d7ca6" stroke-width="2"/><use href="#funnel"/></svg></button>
    <button><svg viewBox="0 0 30 30"><path d="M1 1h19v19H1z" fill="url(#gb)" stroke="#123e57"/><use href="#funnel"/></svg></button>
    <button><svg viewBox="0 0 30 30"><path d="M1 14C3 7 8 12 10 9c4-2 4-7 8-8l9 10c-3 4-4 1-7 5-2 4-3 2-7 8z" fill="url(#gh)" stroke="#1d4f6c"/><use href="#funnel"/></svg></button>
    <button><svg viewBox="0 0 30 30"><path d="M1 6l12-5 11 4v17l-13 5-10-5z" fill="url(#gb)" stroke="#123e57" stroke-width="1.200"/><path d="M1 6l10 4 13-5M11 10v17" fill="none" stroke="#123e57"/><use href="#funnel"/></svg></button>
    <button><svg viewBox="0 0 30 30"><path d="M1 24L24 1" stroke="#2d7ca6" stroke-width="2" stroke-dasharray="8 3 2 3"/><use href="#funnel"/></svg></button>
    <button><svg viewBox="0 0 30 30"><path d="M1 9l16-4v14L1 23z" fill="#4a9cc4" stroke="#123e57"/><path d="M9 1v4M9 8v10M9 23v5" stroke="#222" stroke-width="1.300"/><use href="#funnel"/></svg></button>
    <button><svg viewBox="0 0 30 30"><path d="M4 5h9v9H4z" fill="url(#gb)" stroke="#123e57" stroke-width="1.200"/><use href="#funnel"/></svg></button>
    <button><svg viewBox="0 0 30 30"><path d="M8 1v27M14 1v27M20 1v27M1 8h27M1 15h27M1 22h27" stroke="#ddd"/><path d="M21 2H2v16c0 7 4 9 9 9h7" fill="none" stroke="#2d7ca6" stroke-width="2"/><use href="#funnel"/></svg></button>
    <button><svg viewBox="0 0 30 30"><path d="M4 5v20" stroke="#222" stroke-width="2"/><path d="M4 4h20" stroke="#2d7ca6" stroke-width="2"/><path d="M2 2h3v3H2zM23 2h3v3h-3zM2 24h3v3H2z" fill="#fff" stroke="#222"/><use href="#funnel"/></svg></button>
    <button><svg viewBox="0 0 30 30"><path d="M1 23L23 1" stroke="#2d7ca6" stroke-width="2"/><path d="M10 10h4v4h-4z" fill="#fff" stroke="#222"/><use href="#funnel"/></svg></button>
    <button><svg viewBox="0 0 30 30"><circle cx="12" cy="13" r="7.500" fill="none" stroke="#333" stroke-width="1.600"/><path d="M12 1v7M12 18v7M1 13h6M18 13h6M12 11v4M10 13h4" stroke="#2d7ca6" stroke-width="2"/><use href="#funnel"/></svg></button>
    <button><svg viewBox="0 0 30 30"><path d="M2 1h9v21H2zM11 5h14v14H11z" fill="#e6e6e6" stroke="#333" stroke-width="1.300"/><path d="M0 12h28" stroke="#2d7ca6" stroke-width="2" stroke-dasharray="4 2"/><use href="#funnel"/></svg></button>
    <button><svg viewBox="0 0 30 30"><path d="M15 1l8 8M1 16l8 8M9 24L24 8" stroke="#2d7ca6" stroke-width="2"/><path d="M3 14L14 3" stroke="#222" stroke-width="2"/><path d="M1 17l1-8 6 6zM16 1l-1 8-6-6z" fill="#222"/><use href="#funnel"/></svg></button>
    <button><svg viewBox="0 0 30 30"><path d="M1 15h12M2 15l5 12L18 1h9" fill="none" stroke="#333" stroke-width="1.800"/><use href="#funnel"/></svg></button>
    <button><svg viewBox="0 0 30 30"><path d="M1 1h28v12H1zM15 1v12M3 10h9c0-7-9-7-9 0z" fill="none" stroke="#333" stroke-width="1.400"/><text x="22" y="11" text-anchor="middle" font-family="Liberation Sans, sans-serif" font-size="9" fill="#222">0.3</text><use href="#funnel"/></svg></button>
    <button><svg viewBox="0 0 30 30"><circle cx="17" cy="10" r="9" fill="#eee" stroke="#555" stroke-width="1.300"/><path d="M1 26l9-9" stroke="#222" stroke-width="2"/><text x="17" y="15" text-anchor="middle" font-family="Liberation Sans, sans-serif" font-size="13" fill="#222">N</text><use href="#funnel"/></svg></button>
    <button><svg viewBox="0 0 30 30"><path d="M1 1h17v16H1z" fill="#eee" stroke="#333" stroke-width="1.300"/><path d="M10 17l6 10H4z" fill="#222"/><text x="10" y="14" text-anchor="middle" font-family="Liberation Sans, sans-serif" font-size="13" fill="#222">A</text><use href="#funnel"/></svg></button>
    <button><svg viewBox="0 0 30 30"><path d="M1 20L8 6h16l5-5M24 6l5 5M13 6v10l8-10" fill="none" stroke="#333" stroke-width="1.600"/><use href="#funnel"/></svg></button>
    <button><svg viewBox="0 0 30 30"><path d="M1 2v10h12z" fill="#7fc0dd" stroke="#222" stroke-width="1.200"/><path d="M1 16q5 6 0 12M6 16q5 6 0 12M11 16q5 6 0 12" fill="none" stroke="#222" stroke-width="1.800"/><use href="#funnel"/></svg></button>
    <button><svg viewBox="0 0 30 30"><circle cx="15" cy="11" r="10" fill="#eee" stroke="#444" stroke-width="1.300"/><path d="M5 10h20M1 25l7-6" stroke="#222" stroke-width="1.600"/><text x="15" y="19" text-anchor="middle" font-family="Liberation Serif, serif" font-size="10" fill="#222">A1</text><use href="#funnel"/></svg></button>
    <button><svg viewBox="0 0 30 30"><path d="M6 1h11v20l-5 5-6-5z" fill="url(#gw)" stroke="#444"/><path d="M1 1v18h5M22 1v18h-5" fill="none" stroke="#333" stroke-dasharray="3 2" stroke-width="1.300"/><use href="#funnel"/></svg></button>
    <button><svg viewBox="0 0 30 30"><path d="M1 1h23v23H1z" fill="#eee" stroke="#333" stroke-width="1.300"/><circle cx="19" cy="7" r="3" fill="none" stroke="#333"/><text x="10" y="21" text-anchor="middle" font-family="Liberation Serif, serif" font-weight="bold" font-size="20" fill="#222">A</text><use href="#funnel"/></svg></button>
    <button><svg viewBox="0 0 30 30"><circle cx="13" cy="13" r="12" fill="#eee" stroke="#222" stroke-width="1.400"/><path d="M13 1a12 12 0 0 1 12 12H13zM13 25A12 12 0 0 1 1 13h12z" fill="#222"/><use href="#funnel"/></svg></button>
    <button><svg viewBox="0 0 30 30"><path d="M1 8h15" stroke="#333" stroke-width="1.600"/><path d="M15 3h9v9h-9z" fill="#4a9cc4" stroke="#123e57"/><use href="#funnel"/></svg></button>
    <button><svg viewBox="0 0 30 30"><path d="M1 8h24" stroke="#333" stroke-width="1.600"/><path d="M8 3h9v9H8z" fill="#4a9cc4" stroke="#123e57"/><use href="#funnel"/></svg></button>
    <button><svg viewBox="0 0 30 30"><path d="M1 1h19v19H1z" fill="url(#gb)" stroke="#123e57"/><use href="#mesh"/><use href="#funnel"/></svg></button>
    <button><svg viewBox="0 0 30 30"><path d="M8 1v28" stroke="#2d7ca6" stroke-width="2"/><use href="#mesh"/><use href="#funnel"/></svg></button>
    <button><svg viewBox="0 0 30 30"><circle cx="6" cy="10" r="4" fill="#4a9cc4" stroke="#1d4f6c"/><use href="#mesh"/><use href="#funnel"/></svg></button>
  </div>
</div>

<footer class="status">
  <span>SOLIDWORKS Premium 2022 SP0.0</span>
  <div class="right">
    <svg class="i28" viewBox="0 0 30 28"><path d="M10 2l10 20H0z" fill="#fcc722" stroke="#b26a00"/><path d="M10 8v7M10 17v3" stroke="#222" stroke-width="2"/><path d="M14 22c8 2 12-4 10-12l4 1-6-9-5 8 4-1c0 6-1 9-7 9z" fill="#333"/></svg>
    <button class="units">Custom<i class="up"></i></button>
    <svg class="i28" viewBox="0 0 28 28"><path d="M2 4l8-1 14 14-7 8L3 11z" fill="#ddd" stroke="#333" stroke-width="1.400"/><path d="M8 9l12 12M11 6l13 14M14 3h4l9 10" fill="none" stroke="#333" stroke-width="1.300"/></svg>
  </div>
</footer>
</body>
</html>
```
FILE: styles.css
```css
* { box-sizing: border-box; }
body {
  margin: 0;
  min-height: 100vh;
  display: flex;
  flex-direction: column;
  background: #f7f7f7;
  color: #111;
  font-family: "Noto Sans", "Open Sans", sans-serif;
  font-size: 17px;
  line-height: 23px;
  border-bottom: 2px solid #1c1c24;
}
button, input, select { font: inherit; color: inherit; background: none; border: 0; padding: 0; margin: 0; }
button { display: flex; align-items: center; justify-content: center; white-space: nowrap; }
svg { display: block; flex: none; }
.sprite { position: absolute; width: 0; height: 0; }
.glyph { overflow: visible; }
.i30 { width: 30px; height: 30px; }
.i28 { width: 28px; height: 28px; }
.dd { flex: none; width: 8px; height: 5px; background: #333; clip-path: polygon(0 0, 100% 0, 50% 100%); }
.dd.dim { background: #999; }
.dd.mid { background: #888; }

/* title bar */
.titlebar { display: flex; align-items: center; height: 54px; border-top: 1px solid #bbb; border-bottom: 1px solid #bbb; }
.brand { display: flex; align-items: center; width: 204px; padding-left: 8px; gap: 6px; }
.mark { width: 32px; height: 34px; }
.logo { font-family: Lato, sans-serif; font-style: italic; font-size: 20px; color: #da291c; }
.logo b { font-weight: 900; }
.menu { display: flex; height: 46px; }
.menu button { width: 49px; border: 1px solid transparent; }
.menu button:nth-child(2) { width: 40px; }
.menu button:nth-child(3) { width: 54px; }
.menu button:nth-child(4) { width: 58px; }
.menu button:nth-child(5) { width: 56px; }
.menu button:nth-child(6) { width: 76px; }
.menu .open { background: #fff; border-color: #bbb; }
.pin { width: 42px; height: 52px; }
.quick { display: flex; align-items: center; height: 52px; border-left: 1px solid #bbb; padding-left: 31px; }
.q { width: 32px; margin: 0 7px; }
.quick .q + .dd { margin: 0 8px 0 0; }
.pick { display: flex; height: 47px; }
.pickmain { width: 42px; background: #b0b0b0; border: 1px solid #777; }
.pickdd { width: 20px; border: 1px solid #888; border-left: 0; background: #f7f7f7; }
.cur { width: 20px; height: 30px; }
.doctitle { flex: 1; text-align: center; padding-left: 2px; }
.search { display: flex; align-items: center; width: 303px; height: 35px; padding: 0 6px 0 8px; background: #fff; border: 1px solid #bbb; gap: 11px; }
.search input { flex: 1; min-width: 0; outline: 0; }
.search input::placeholder { color: #666; opacity: 1; }
.winctl, .mdi { display: flex; align-items: center; color: #444; }
.winctl button { width: 56px; }
.winctl { padding: 0 5px; }

/* ribbon */
.ribbon { display: flex; height: 117px; }
.group { display: flex; margin-bottom: 4px; border-right: 1px solid #c4c4c4; }
.group.last { border: 0; }
.g-sketch { padding: 0 2px 0 5px; }
.cmd { position: relative; flex-direction: column; justify-content: flex-start; padding-top: 6px; line-height: 23px; }
.cmd span { padding-top: 2px; text-align: center; }
.cmd .dd { margin-top: auto; margin-bottom: 8px; }
.cmd:disabled, .row:disabled { color: #b4b4b4; }
.w57 { width: 57px; } .w62 { width: 62px; } .w66 { width: 66px; } .w68 { width: 68px; } .w80 { width: 80px; } .w82 { width: 82px; } .w90 { width: 90px; } .w120 { width: 120px; }
.g-tools { display: grid; grid-template-columns: 30px 23px 30px 23px 30px 23px 30px; grid-auto-rows: 38px; align-items: center; justify-items: center; padding: 0 5px; }
.stack { display: grid; grid-auto-rows: 38px; width: 243px; padding-left: 5px; }
.row { justify-content: flex-start; gap: 8px; padding-right: 5px; }
.row .dd { margin-left: auto; }
.collapse { margin: 90px 10px 0 auto; height: 14px; }

/* command tabs over the graphics background */
.workspace {
  flex: 1;
  display: flex;
  flex-direction: column;
  border-top: 1px solid #888;
  border-right: 1px solid #222;
  background:
    linear-gradient(180deg, rgba(255,255,255,0) 0, rgba(255,255,255,0) 54%, rgba(254,254,255,.9) 70%, #fefeff 78%, #f5f6f9 100%),
    radial-gradient(ellipse 22% 40% at 100% 0, rgba(255,255,255,.5) 0, rgba(255,255,255,0) 100%),
    radial-gradient(ellipse 64% 62% at 8% 8%, #fff 0, #fff 50%, rgba(255,255,255,0) 100%),
    linear-gradient(180deg, #e2e6ef 0, #e0e4ee 35%, #dde1ec 55%, #e2e5ef 100%);
}
.tabrow { display: flex; justify-content: space-between; height: 33px; }
.tabs { display: grid; grid-template-columns: 87px 74px 88px 147px 81px 88px 159px 202px 183px 219px; height: 33px; }
.tabs button { background: #d4d4d4; border-right: 1px solid #888; border-bottom: 1px solid #888; color: #222; }
.tabs .on { background: #f7f7f7; font-weight: bold; border-bottom-color: #f7f7f7; color: #333; }
.mdi { color: #999; padding-right: 4px; height: 42px; }
.mdi button { width: 38px; }

.stage { flex: 1; display: flex; }
.panel { position: relative; width: 290px; display: flex; flex-direction: column; background: #f7f7f7; border-right: 1px solid #888; border-left: 1px solid #bbb; padding-bottom: 4px; }
.grip { display: flex; align-items: center; justify-content: center; height: 26px; margin: 4px 4px 4px 0; border-top: 1px solid #c4c4c4; border-bottom: 1px solid #c4c4c4; }
.knob { width: 10px; height: 10px; border-radius: 50%; border: 1px solid #999; background: #d4d4d4; }
.ptabs { display: flex; height: 38px; margin-right: 2px; border-top: 1px solid #888; }
.ptabs button { width: 52px; background: #d4d4d4; border-right: 1px solid #888; border-bottom: 1px solid #888; }
.ptabs button:first-child { width: 53px; }
.ptabs .on { background: #f7f7f7; border-bottom-color: #f7f7f7; }
.ptabs .more { flex: 1; width: auto; padding-left: 8px; background: #f7f7f7; border: 0; }
.ptabs .pball { position: relative; }
.back { position: absolute; right: 0; bottom: 0; width: 18px; height: 22px; background: #f7f7f7; border: 1px solid #aaa; }
.back::after { content: ""; position: absolute; left: 5px; top: 5px; width: 6px; height: 10px; background: #111; clip-path: polygon(100% 0, 100% 100%, 0 50%); }
.filter { display: flex; align-items: center; height: 38px; margin: 0 5px 0 4px; padding-left: 5px; border: 1px solid #c0c0c0; }
.filter input { flex: 1; min-width: 0; outline: 0; }
.root { display: flex; align-items: center; gap: 5px; height: 32px; padding-left: 5px; margin-right: 2px; overflow: hidden; white-space: nowrap; }
.tree { list-style: none; margin: 0; padding: 0; }
.tree li { display: flex; height: 32px; }
.tree button { gap: 6px; padding: 0 3px; border: 1px solid transparent; }
.tree .sel { background: #a8c8e3; border-color: #3d8cba; }
.tw { width: 35px; }
.tw.has::before { content: ""; display: block; width: 6px; height: 11px; margin: 9px 0 0 14px; background: #555; clip-path: polygon(0 0, 100% 50%, 0 100%); }
.rollback { height: 5px; margin-right: 2px; background: #3089c4; border-bottom: 1px solid #1a3c96; }
.hscroll { margin-top: auto; margin-right: 2px; height: 26px; padding: 7px 0 0 26px; background: #f0f0f0; border-top: 1px solid #fff; }
.hscroll i { display: block; width: 146px; height: 11px; background: #888; }
.split { position: absolute; left: 288px; top: 499px; width: 14px; height: 59px; display: flex; align-items: center; justify-content: center; background: #f7f7f7; border: 1px solid #888; border-left: 0; z-index: 1; }

.view { position: relative; flex: 1; min-width: 0; }
.scene { position: absolute; inset: 0; width: 100%; height: 100%; }
.crumbs { position: absolute; left: 15px; top: 17px; width: 353px; height: 36px; display: flex; }
.crumbbg { position: absolute; inset: 0; width: 100%; height: 100%; }
.crumbs button { position: relative; font-size: 15px; opacity: .85; }
.c1 { width: 68px; } .c2 { width: 30px; } .c3 { width: 194px; gap: 8px; padding-left: 16px; } .c4 { width: 56px; }
.hud { position: absolute; left: 910px; top: 6px; height: 28px; display: flex; align-items: center; opacity: .85; }
.hud button { width: 30px; margin-right: 8px; }
.hud .dd { margin: 0 8px 0 -1px; }
.taskpane { position: absolute; right: 0; top: 43px; width: 39px; border: 1px solid #888; border-right: 0; }
.taskpane button { width: 38px; height: 36px; background: #d4d4d4; border-bottom: 1px solid #888; }
.taskpane button:last-child { border-bottom: 0; }
.taskpane .on { background: #f7f7f7; }

/* bottom bars */
.modelbar { display: flex; height: 25px; border-top: 1px solid #888; padding-left: 2px; }
.step { display: flex; border-top: 1px solid #111; }
.step button { width: 24px; background: #a8aac0; border: 1px solid #8c8ea8; }
.step svg { width: 22px; height: 22px; }
.mtab { width: 172px; padding-right: 10px; background: #d4d4d4; border-left: 1px solid #888; border-right: 1px solid #888; font-size: 18px; }
.mtab.on { width: 88px; padding: 0 0 0 6px; background: #f7f7f7; font-weight: bold; border: 0; }
.layerbar { display: flex; align-items: center; height: 47px; width: 1382px; padding-left: 4px; border-bottom: 1px solid #888; }
.dots { flex: none; width: 2px; height: 38px; background: repeating-linear-gradient(180deg, #999 0 2px, #f7f7f7 2px 4px); }
.combo { display: flex; align-items: center; width: 98px; height: 37px; margin-left: 10px; padding: 0 7px 0 3px; background: #fafafa; border: 1px solid #e4e4e4; }
.combo select { flex: 1; min-width: 0; appearance: none; color: #999; opacity: 1; font-size: 18px; }
.layers { width: 47px; height: 100%; border-right: 1px solid #888; padding-right: 8px; }
.filterbar { display: flex; align-items: center; height: 44px; padding-left: 4px; border-bottom: 1px solid #888; }
.fl { width: 39px; }
.filterbar .dots + .fl { margin-left: 8px; }
.low { height: 38px; }
.low .pickmain { width: 50px; padding-right: 12px; }
.low .pickdd { width: 15px; }
.two { width: 41px; height: 34px; border-right: 1px solid #888; }
.filters { display: flex; align-items: center; height: 44px; padding: 0 3px 0 9px; border-right: 1px solid #888; }
.filters button { width: 39px; justify-content: flex-start; }
.filters svg { width: 30px; height: 30px; }
.status { display: flex; align-items: center; justify-content: space-between; height: 26px; padding: 2px 5px 0 2px; }
.right { display: flex; align-items: center; }
.units { width: 198px; justify-content: flex-end; gap: 23px; padding-right: 24px; }
.up { width: 7px; height: 4px; background: #333; clip-path: polygon(50% 0, 100% 100%, 0 100%); }
```
